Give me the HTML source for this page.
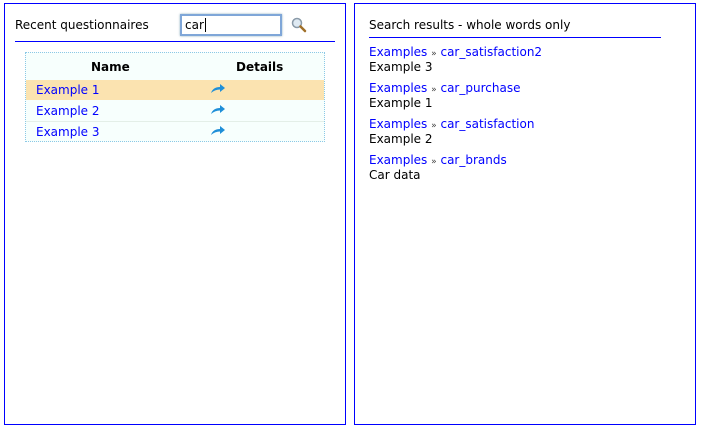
<!DOCTYPE html>
<html><head><style>
body{margin:0;width:704px;height:433px;background:#fff;font-family:"DejaVu Sans","Liberation Sans",sans-serif;font-size:12px;color:#000;position:relative;overflow:hidden}
.p{position:absolute;border:1px solid #00f;box-sizing:border-box}
.a{position:absolute;white-space:nowrap;line-height:15px}
.b{color:#00f}
.r{font-size:9px;color:#444}
</style></head><body>
<div class="p" style="left:4px;top:3px;width:342px;height:422px"></div>
<div class="p" style="left:354px;top:3px;width:342px;height:422px"></div>
<div class="a" style="left:15px;top:18px">Recent questionnaires</div>
<div class="a" style="left:180px;top:14px;width:102px;height:22px;box-sizing:border-box;border:2px solid #7fa6d8;box-shadow:0 0 2px #8ab;background:#fff"></div>
<div class="a" style="left:185px;top:18px">car<span style="border-left:1px solid #000;margin-left:1px"></span></div>
<svg class="a" style="left:291px;top:17px" width="16" height="16"><circle cx="6" cy="6" r="4.5" fill="#dfeaf3" stroke="#8a9aa8" stroke-width="1.5"/><line x1="9.5" y1="9.5" x2="14" y2="14" stroke="#a0702a" stroke-width="2.5" stroke-linecap="round"/></svg>
<div class="a" style="left:15px;top:41px;width:320px;height:1px;background:#00f"></div>
<div class="a" style="left:25px;top:52px;width:300px;height:90px;box-sizing:border-box;border:1px dotted #8cc8e6;background:#f7fffd"></div>
<div class="a" style="left:26px;top:80px;width:298px;height:20px;background:#fbe3b0"></div>
<div class="a" style="left:26px;top:121px;width:298px;height:1px;background:#e4efe8"></div>
<div class="a" style="left:91px;top:60px;font-weight:bold">Name</div>
<div class="a" style="left:236px;top:60px;font-weight:bold">Details</div>
<div class="a b" style="left:36px;top:83px">Example 1</div>
<div class="a b" style="left:36px;top:104px">Example 2</div>
<div class="a b" style="left:36px;top:125px">Example 3</div>
<svg class="a" style="left:210px;top:84px" width="16" height="10"><path d="M1 9 Q3 3 10 3 L10 0 L15 4 L10 8 L10 5.5 Q5 5.5 1 9Z" fill="#1f8fd8"/></svg>
<svg class="a" style="left:210px;top:105px" width="16" height="10"><path d="M1 9 Q3 3 10 3 L10 0 L15 4 L10 8 L10 5.5 Q5 5.5 1 9Z" fill="#1f8fd8"/></svg>
<svg class="a" style="left:210px;top:126px" width="16" height="10"><path d="M1 9 Q3 3 10 3 L10 0 L15 4 L10 8 L10 5.5 Q5 5.5 1 9Z" fill="#1f8fd8"/></svg>
<div class="a" style="left:369px;top:18px">Search results - whole words only</div>
<div class="a" style="left:369px;top:37px;width:292px;height:1px;background:#00f"></div>
<div class="a" style="left:369px;top:45px"><span class="b">Examples</span> <span class="r">»</span> <span class="b">car_satisfaction2</span></div>
<div class="a" style="left:369px;top:60px">Example 3</div>
<div class="a" style="left:369px;top:81px"><span class="b">Examples</span> <span class="r">»</span> <span class="b">car_purchase</span></div>
<div class="a" style="left:369px;top:96px">Example 1</div>
<div class="a" style="left:369px;top:117px"><span class="b">Examples</span> <span class="r">»</span> <span class="b">car_satisfaction</span></div>
<div class="a" style="left:369px;top:132px">Example 2</div>
<div class="a" style="left:369px;top:153px"><span class="b">Examples</span> <span class="r">»</span> <span class="b">car_brands</span></div>
<div class="a" style="left:369px;top:168px">Car data</div>
</body></html>
